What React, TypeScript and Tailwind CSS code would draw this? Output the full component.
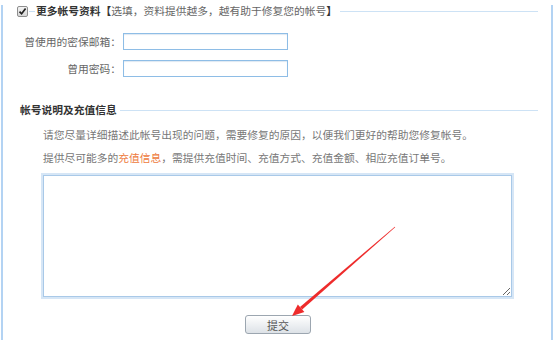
import React from "react";

function Check() {
  return (
    <span className="flex h-[11px] w-[11px] items-center justify-center rounded-[2px] border border-[#8e8e8e] bg-gradient-to-b from-[#f4f4f4] to-[#d6d6d6]">
      <svg width="9" height="9" viewBox="0 0 9 9">
        <path d="M1.5 4.6 L3.6 6.8 L7.6 1.6" fill="none" stroke="#222" strokeWidth="1.7" />
      </svg>
    </span>
  );
}

function Field({ label, top }: { label: string; top: string }) {
  return (
    <div className={`flex items-center ${top}`}>
      <span className="w-[118px] text-right text-[#666]">{label}</span>
      <input
        type="text"
        className="ml-[2px] h-[17px] w-[165px] border border-[#8ebde6] bg-white shadow-[inset_0_1px_1px_rgba(120,160,200,0.25)] outline-none"
      />
    </div>
  );
}

export default function App() {
  return (
    <div className="relative h-[340px] w-[554px] overflow-hidden bg-white font-['Noto_Sans_CJK_SC',sans-serif]">
      <div className="ml-[1px] h-full w-[552px] border-x-2 border-[#b3d3f3] text-[10.75px] leading-[12px]">
        <div className="mt-[5px] flex h-[12px] items-center pl-[14px] pr-[13px]">
          <Check />
          <span className="mx-[1px] h-px w-[6px] bg-[#c7def3]" />
          <span className="font-bold text-[#333]">更多帐号资料【</span>
          <span className="text-[#666]">选填，资料提供越多，越有助于修复您的帐号</span>
          <span className="font-bold text-[#333]">】</span>
          <span className="ml-[3px] h-px flex-1 bg-[#cde2f5]" />
        </div>

        <Field label="曾使用的密保邮箱：" top="mt-[16px]" />
        <Field label="曾用密码：" top="mt-[10px]" />

        <div className="mt-[27px] flex h-[12px] items-center pl-[17px] pr-[13px]">
          <span className="font-bold text-[#333]">帐号说明及充值信息</span>
          <span className="ml-[3px] h-px flex-1 bg-[#cde2f5]" />
        </div>

        <p className="mt-[13px] pl-[40px] text-[#777]">
          请您尽量详细描述此帐号出现的问题，需要修复的原因，以便我们更好的帮助您修复帐号。
        </p>
        <p className="mt-[11px] pl-[40px] text-[#777]">
          提供尽可能多的<span className="text-[#ee7a3c]">充值信息</span>，需提供充值时间、充值方式、充值金额、相应充值订单号。
        </p>

        <div className="ml-[38px] mt-[9px] h-[126px] w-[473px] border-2 border-[#d6e6f6]">
          <textarea className="block h-full w-full resize border border-[#a9c9e8] bg-white outline-none" />
        </div>

        <button className="ml-[242px] mt-[16px] flex h-[19px] w-[66px] items-center justify-center rounded-[3px] border border-[#9ca6b0] bg-gradient-to-b from-white to-[#dde2e7] text-[11px] text-[#555]">
          提交
        </button>
      </div>

      <svg className="pointer-events-none absolute inset-0" width="554" height="340" viewBox="0 0 554 340">
        <polygon
          points="395.2,227.2 394.8,226.8 300,306.9 302.2,309.5"
          fill="#ee2b2b"
        />
        <polygon points="292,316 297.8,304.4 304.4,312" fill="#ee2b2b" />
      </svg>
    </div>
  );
}
